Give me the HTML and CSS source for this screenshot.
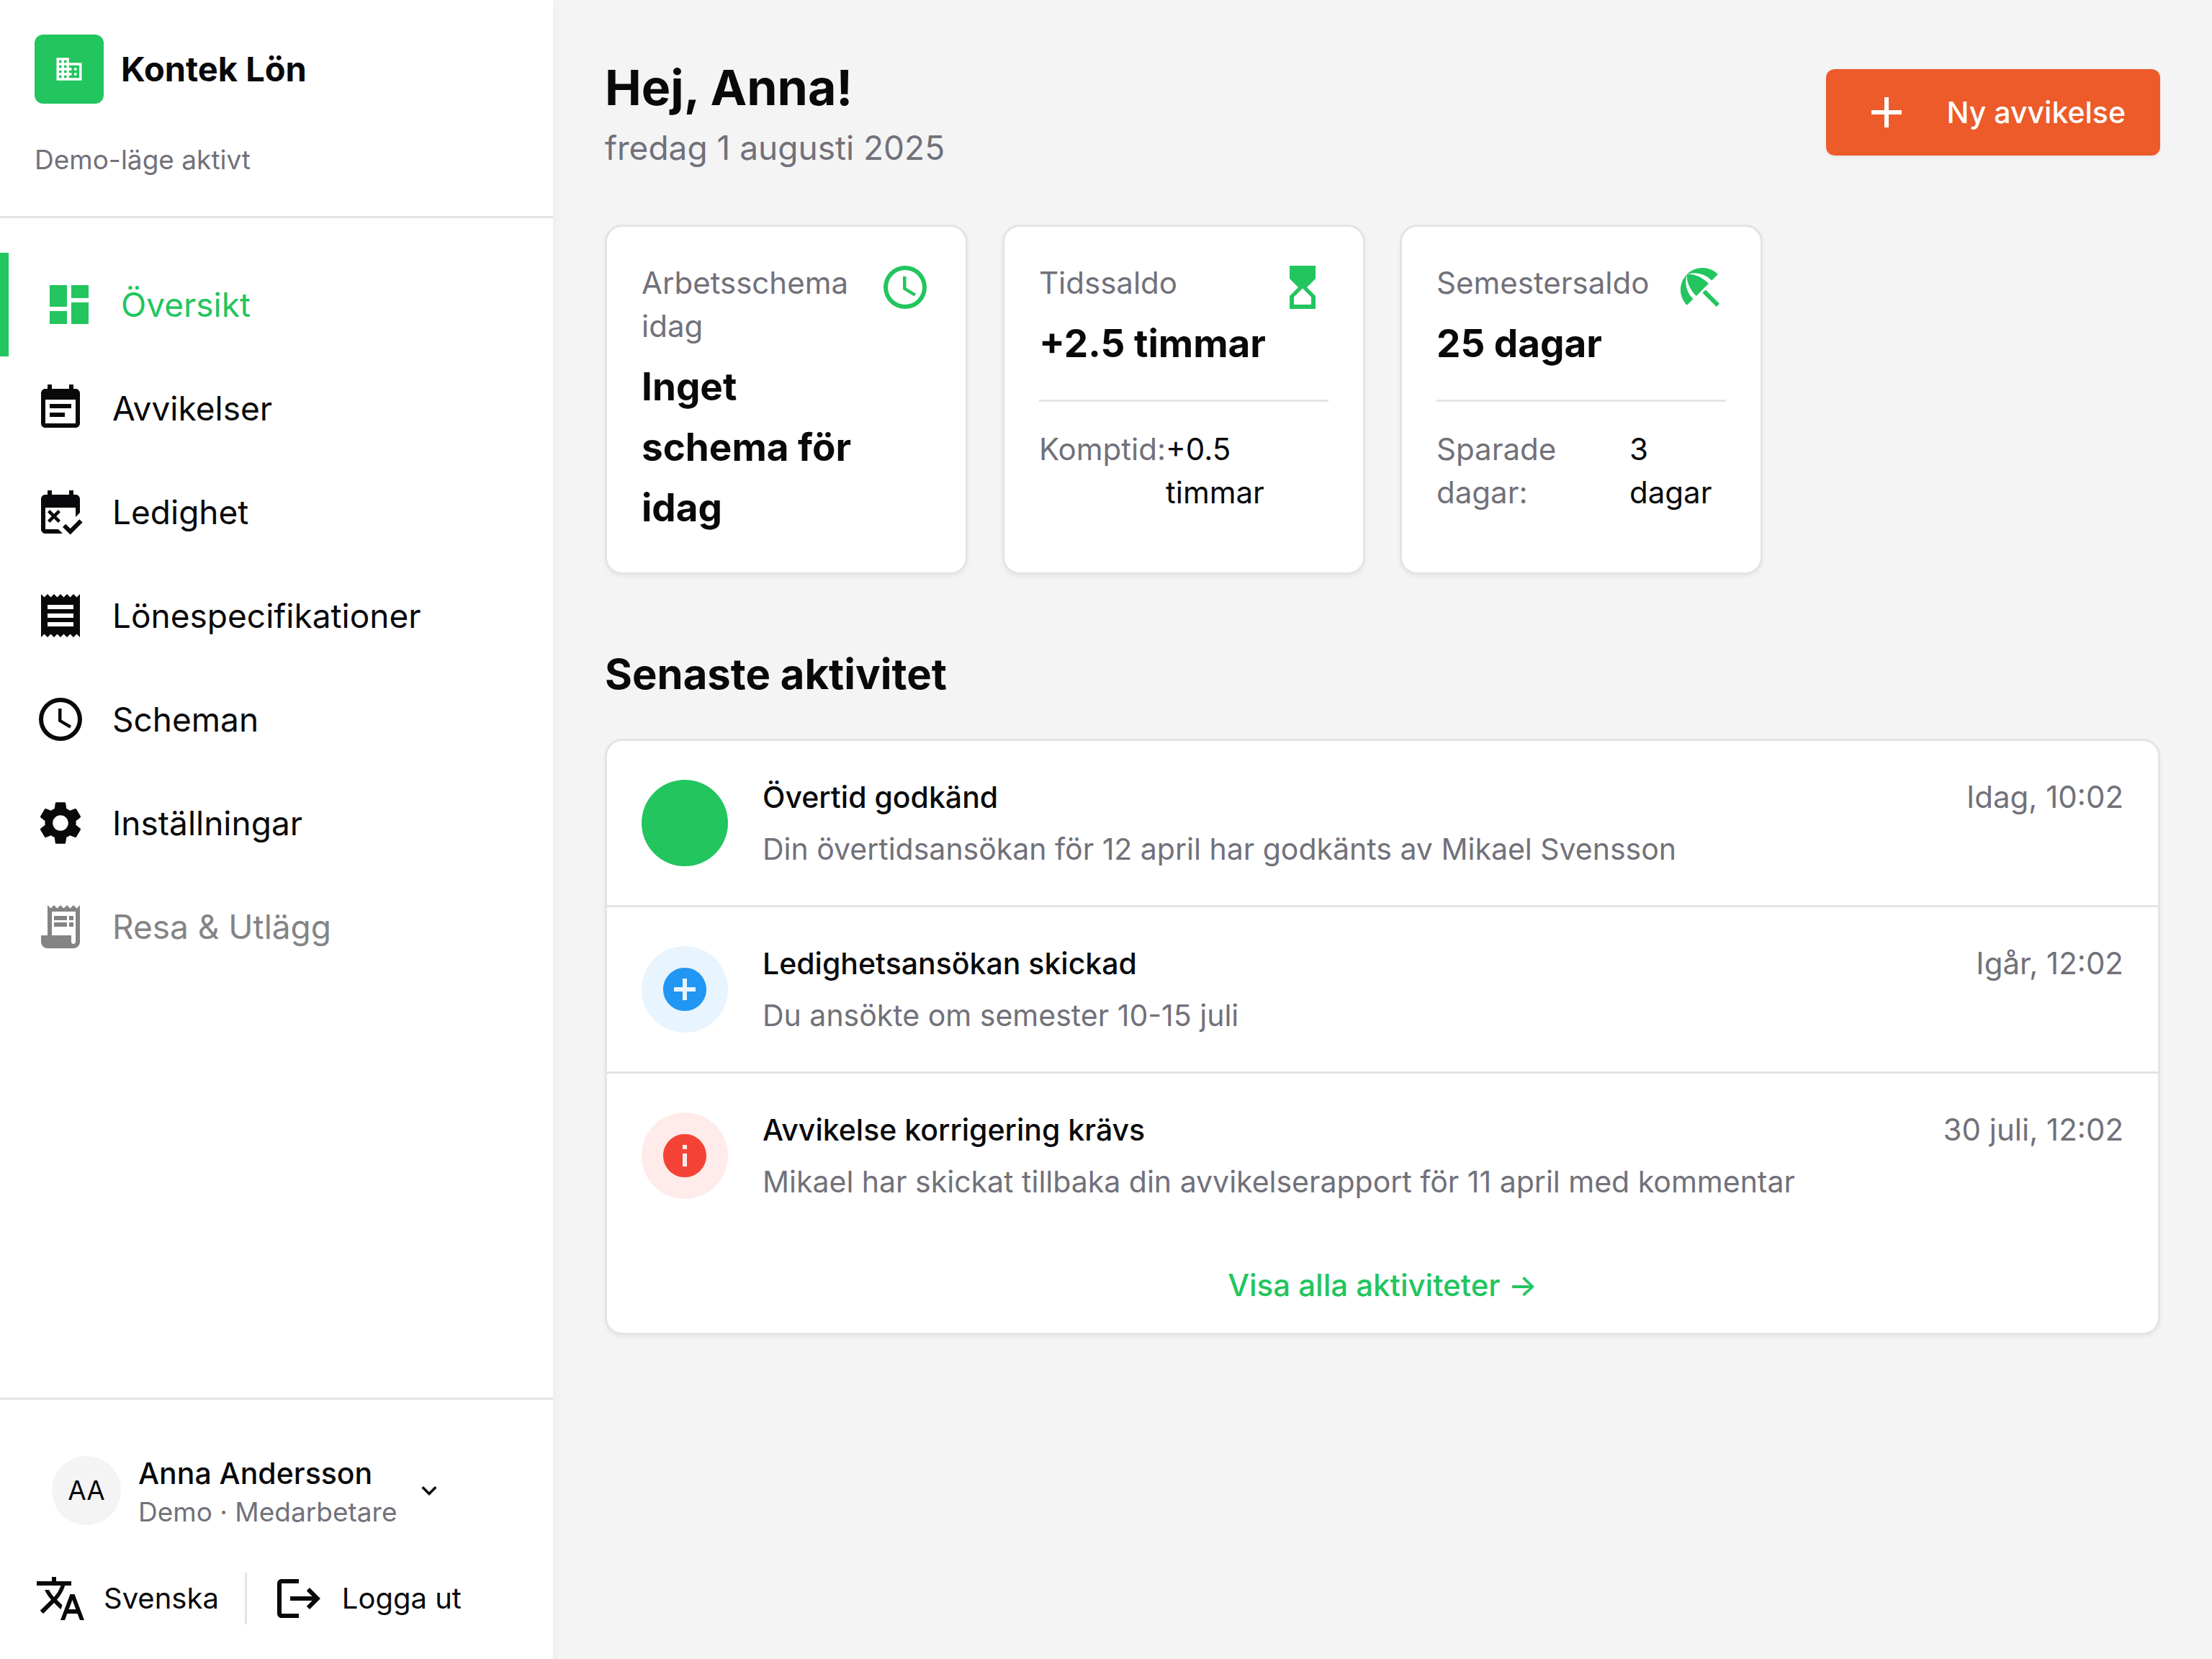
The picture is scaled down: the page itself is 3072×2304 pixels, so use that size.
FILE: index.html
```html
<!DOCTYPE html>
<html lang="sv">
<head>
<meta charset="utf-8">
<title>Kontek Lön</title>
<meta name="viewport" content="width=device-width, initial-scale=1">
<link rel="stylesheet" href="styles.css">
</head>
<body>
<div class="app">
  <aside class="sidebar">
    <header class="brand">
      <div class="brand-row">
        <span class="brand-logo"><svg class="icon-small" viewBox="0 0 24 24" aria-hidden="true"><path d="M12 7V3H2v18h20V7H12zM6 19H4v-2h2v2zm0-4H4v-2h2v2zm0-4H4V9h2v2zm0-4H4V5h2v2zm4 12H8v-2h2v2zm0-4H8v-2h2v2zm0-4H8V9h2v2zm0-4H8V5h2v2zm10 12h-8v-2h2v-2h-2v-2h2v-2h-2V9h8v10zm-2-8h-2v2h2v-2zm0 4h-2v2h2v-2z"/></svg></span>
        <span class="brand-name">Kontek Lön</span>
      </div>
      <p class="brand-mode">Demo-läge aktivt</p>
    </header>

    <nav class="nav">
      <a class="nav-item nav-item-active" href="#oversikt" aria-current="page"><svg class="icon" viewBox="0 0 24 24" aria-hidden="true"><path d="M3 13h8V3H3v10zm0 8h8v-6H3v6zm10 0h8V11h-8v10zm0-18v6h8V3h-8z"/></svg>Översikt</a>
      <a class="nav-item" href="#avvikelser"><svg class="icon" viewBox="0 0 24 24" aria-hidden="true"><path d="M19 3h-1V1h-2v2H8V1H6v2H5c-1.110 0-1.990.9-1.990 2L3 19c0 1.100.89 2 2 2h14c1.100 0 2-.9 2-2V5c0-1.100-.9-2-2-2zm0 16H5V8h14v11zM7 10h10v2H7zM7 14h7v2H7z"/></svg>Avvikelser</a>
      <a class="nav-item" href="#ledighet"><svg class="icon" viewBox="0 0 24 24" aria-hidden="true"><path d="M5 22c-1.100 0-2-.9-2-2V6c0-1.100.9-2 2-2h1V2h2v2h8V2h2v2h1c1.100 0 2 .9 2 2v6.300l-2 2V10H5v10h6l2 2H5z"/><path d="M12 12.060 10.940 11 9 12.940 7.060 11 6 12.060 7.940 14 6 15.940 7.060 17 9 15.060 10.940 17 12 15.940 10.060 14z"/><path d="M16.540 22.500 13 18.960l1.410-1.410 2.130 2.120 4.240-4.240 1.410 1.410z"/></svg>Ledighet</a>
      <a class="nav-item" href="#lonespecifikationer"><svg class="icon" viewBox="0 0 24 24" aria-hidden="true"><path d="M18 17H6v-2h12v2zm0-4H6v-2h12v2zm0-4H6V7h12v2zM3 22l1.5-1.5L6 22l1.5-1.5L9 22l1.5-1.5L12 22l1.5-1.5L15 22l1.5-1.5L18 22l1.5-1.5L21 22V2l-1.5 1.5L18 2l-1.5 1.5L15 2l-1.5 1.5L12 2l-1.5 1.5L9 2 7.5 3.5 6 2 4.5 3.5 3 2v20z"/></svg>Lönespecifikationer</a>
      <a class="nav-item" href="#scheman"><svg class="icon" viewBox="0 0 24 24" aria-hidden="true"><path fill-rule="evenodd" d="M12 2a10 10 0 1 0 0 20a10 10 0 1 0 0-20zM12 4a8 8 0 1 1 0 16a8 8 0 1 1 0-16z"/><path d="M12.5 7H11v6l5.250 3.150.75-1.230-4.5-2.670z"/></svg>Scheman</a>
      <a class="nav-item" href="#installningar"><svg class="icon" viewBox="0 0 24 24" aria-hidden="true"><path d="M19.14 12.94c.04-.3.06-.61.06-.94 0-.32-.02-.64-.07-.94l2.030-1.580c.18-.14.23-.41.12-.61l-1.920-3.320c-.12-.22-.37-.29-.59-.22l-2.390.96c-.5-.38-1.030-.7-1.620-.94l-.36-2.540c-.04-.24-.24-.41-.48-.41h-3.840c-.24 0-.43.17-.47.41l-.36 2.540c-.59.24-1.130.57-1.620.94l-2.390-.96c-.22-.08-.47 0-.59.22L2.740 8.870c-.12.21-.08.47.12.61l2.030 1.580c-.05.3-.09.63-.09.94s.02.64.07.94l-2.030 1.580c-.18.14-.23.41-.12.61l1.920 3.320c.12.22.37.29.59.22l2.390-.96c.5.38 1.030.7 1.620.94l.36 2.540c.05.24.24.41.48.41h3.840c.24 0 .44-.17.47-.41l.36-2.540c.59-.24 1.130-.56 1.620-.94l2.390.96c.22.08.47 0 .59-.22l1.920-3.320c.12-.22.07-.47-.12-.61l-2.010-1.580zM12 15.600c-1.980 0-3.600-1.620-3.600-3.600s1.620-3.600 3.600-3.600 3.600 1.620 3.600 3.600-1.620 3.600-3.600 3.600z"/></svg>Inställningar</a>
      <a class="nav-item nav-item-disabled" href="#resa" aria-disabled="true"><svg class="icon" viewBox="0 0 24 24" aria-hidden="true"><path d="M19.5 3.5L18 2l-1.5 1.5L15 2l-1.5 1.5L12 2l-1.5 1.5L9 2 7.500 3.500 6 2v14H3v3c0 1.660 1.340 3 3 3h12c1.660 0 3-1.340 3-3V2l-1.500 1.500zM19 19c0 .55-.45 1-1 1s-1-.45-1-1v-3H8V5h11v14z"/><path d="M9 7h6v2H9zM16 7h2v2h-2zM9 10h6v2H9zM16 10h2v2h-2z"/></svg>Resa &amp; Utlägg</a>
    </nav>

    <footer class="account">
      <button class="account-button" type="button">
        <span class="avatar">AA</span>
        <span class="account-text">
          <span class="account-name">Anna Andersson</span>
          <span class="account-role">Demo · Medarbetare</span>
        </span>
        <svg class="icon-small" viewBox="0 0 24 24" aria-hidden="true"><path d="M7.410 8.590 12 13.170l4.590-4.580L18 10l-6 6-6-6z"/></svg>
      </button>
      <div class="account-actions">
        <button class="action" type="button"><svg class="icon" viewBox="0 0 24 24" aria-hidden="true"><path d="M12.870 15.070l-2.540-2.510.03-.03c1.740-1.940 2.980-4.170 3.710-6.530H17V4h-7V2H8v2H1v1.990h11.170C11.500 7.920 10.440 9.750 9 11.350 8.070 10.320 7.300 9.190 6.690 8h-2c.73 1.630 1.730 3.170 2.980 4.560l-5.090 5.020L4 19l5-5 3.110 3.110.76-2.040zM18.500 10h-2L12 22h2l1.120-3h4.750L21 22h2l-4.500-12zm-2.620 7l1.620-4.330L19.120 17h-3.240z"/></svg>Svenska</button>
        <span class="action-divider"></span>
        <button class="action" type="button"><svg class="icon" viewBox="0 0 24 24" aria-hidden="true"><path d="M17 7l-1.410 1.410L18.170 11H8v2h10.170l-2.580 2.580L17 17l5-5zM4 5h8V3H4c-1.100 0-2 .9-2 2v14c0 1.100.9 2 2 2h8v-2H4V5z"/></svg>Logga ut</button>
      </div>
    </footer>
  </aside>

  <main class="main">
    <header class="page-header">
      <div>
        <h1 class="greeting">Hej, Anna!</h1>
        <p class="date">fredag 1 augusti 2025</p>
      </div>
      <button class="primary-button" type="button"><svg class="icon" viewBox="0 0 24 24" aria-hidden="true"><path d="M19 13h-6v6h-2v-6H5v-2h6V5h2v6h6v2z"/></svg>Ny avvikelse</button>
    </header>

    <section class="stats">
      <article class="card stat">
        <div class="stat-top">
          <div>
            <h2 class="stat-label">Arbetsschema idag</h2>
            <p class="stat-value">Inget schema för idag</p>
          </div>
          <svg class="icon stat-icon" viewBox="0 0 24 24" aria-hidden="true"><path fill-rule="evenodd" d="M12 2a10 10 0 1 0 0 20a10 10 0 1 0 0-20zM12 4a8 8 0 1 1 0 16a8 8 0 1 1 0-16z"/><path d="M12.5 7H11v6l5.250 3.150.75-1.230-4.5-2.670z"/></svg>
        </div>
      </article>
      <article class="card stat">
        <div class="stat-top">
          <div>
            <h2 class="stat-label">Tidssaldo</h2>
            <p class="stat-value">+2.5 timmar</p>
          </div>
          <svg class="icon stat-icon" viewBox="0 0 24 24" aria-hidden="true"><path d="M6 2v6h.01L6 8.010 10 12l-4 4 .01.01H6V22h12v-5.990h-.01L18 16l-4-4 4-3.990-.01-.01H18V2H6zm10 14.500V20H8v-3.500l4-4 4 4z"/></svg>
        </div>
        <dl class="stat-detail">
          <dt>Komptid:</dt>
          <dd>+0.5 timmar</dd>
        </dl>
      </article>
      <article class="card stat">
        <div class="stat-top">
          <div>
            <h2 class="stat-label">Semestersaldo</h2>
            <p class="stat-value">25 dagar</p>
          </div>
          <svg class="icon stat-icon" viewBox="0 0 24 24" aria-hidden="true"><path d="M13.127 14.560l1.430-1.430 6.440 6.443L19.570 21zm4.293-5.730l2.860-2.860c-3.950-3.950-10.350-3.960-14.300-.02 3.930-1.300 8.310-.25 11.440 2.880zM5.950 5.980c-3.940 3.950-3.930 10.350.02 14.300l2.860-2.860C5.700 14.290 4.650 9.910 5.950 5.980zm.02-.02l-.01.01c-.38 3.010 1.170 6.880 4.300 10.020l5.730-5.730c-3.130-3.130-7.010-4.680-10.020-4.300z"/></svg>
        </div>
        <dl class="stat-detail">
          <dt>Sparade dagar:</dt>
          <dd>3 dagar</dd>
        </dl>
      </article>
    </section>

    <section class="activity">
      <h2 class="section-title">Senaste aktivitet</h2>
      <div class="card">
        <ul class="activity-list">
          <li class="activity-item">
            <span class="badge badge-success"></span>
            <div class="activity-body">
              <div class="activity-head">
                <h3 class="activity-title">Övertid godkänd</h3>
                <time class="activity-time">Idag, 10:02</time>
              </div>
              <p class="activity-text">Din övertidsansökan för 12 april har godkänts av Mikael Svensson</p>
            </div>
          </li>
          <li class="activity-item">
            <span class="badge badge-info"><svg class="icon" viewBox="0 0 24 24" aria-hidden="true"><path d="M12 2C6.480 2 2 6.480 2 12s4.480 10 10 10 10-4.480 10-10S17.520 2 12 2zm5 11h-4v4h-2v-4H7v-2h4V7h2v4h4v2z"/></svg></span>
            <div class="activity-body">
              <div class="activity-head">
                <h3 class="activity-title">Ledighetsansökan skickad</h3>
                <time class="activity-time">Igår, 12:02</time>
              </div>
              <p class="activity-text">Du ansökte om semester 10-15 juli</p>
            </div>
          </li>
          <li class="activity-item">
            <span class="badge badge-error"><svg class="icon" viewBox="0 0 24 24" aria-hidden="true"><path d="M12 2C6.480 2 2 6.480 2 12s4.480 10 10 10 10-4.480 10-10S17.520 2 12 2zm1 15h-2v-6h2v6zm0-8h-2V7h2v2z"/></svg></span>
            <div class="activity-body">
              <div class="activity-head">
                <h3 class="activity-title">Avvikelse korrigering krävs</h3>
                <time class="activity-time">30 juli, 12:02</time>
              </div>
              <p class="activity-text">Mikael har skickat tillbaka din avvikelserapport för 11 april med kommentar</p>
            </div>
          </li>
        </ul>
        <div class="activity-more"><a href="#aktiviteter">Visa alla aktiviteter →</a></div>
      </div>
    </section>
  </main>
</div>
</body>
</html>
```
FILE: styles.css
```css
:root {
  --text: #09090b;
  --muted: #71717a;
  --line: #e4e4e7;
  --card-line: #e4e4e4;
  --green: #22c55e;
  --orange: #ec5b29;
  --page: #f4f4f5;
}

* { box-sizing: border-box; }

body, h1, h2, h3, p, ul, dl, dd { margin: 0; padding: 0; }

body {
  background: var(--page);
  color: var(--text);
  font-family: Inter, "Liberation Sans", sans-serif;
  font-size: 42px;
  line-height: 60px;
}

button {
  border: 0;
  background: none;
  padding: 0;
  color: inherit;
  font: inherit;
  cursor: pointer;
}

a { color: inherit; text-decoration: none; }

.icon, .icon-small { flex: none; display: block; fill: currentColor; }
.icon { width: 72px; height: 72px; }
.icon-small { width: 42px; height: 42px; }

.app { display: flex; min-height: 100vh; }

/* Sidebar */
.sidebar {
  flex: none;
  width: 768px;
  display: flex;
  flex-direction: column;
  background: #fff;
  box-shadow: 0 12px 18px -3px rgba(0, 0, 0, 0.06);
}

.brand { padding: 48px; border-bottom: 3px solid var(--line); }
.brand-row { display: flex; align-items: center; gap: 24px; }
.brand-logo {
  width: 96px;
  height: 96px;
  display: grid;
  place-items: center;
  border-radius: 12px;
  background: var(--green);
  color: #fff;
}
.brand-name { font-size: 47px; font-weight: 700; }
.brand-mode { margin-top: 48px; font-size: 37px; color: var(--muted); }

.nav { flex: 1; padding: 48px 0; font-size: 46px; }
.nav-item {
  display: flex;
  align-items: center;
  gap: 36px;
  height: 144px;
  padding: 0 48px;
}
.nav-item-active { border-left: 12px solid var(--green); color: var(--green); }
.nav-item-disabled { color: #848485; }

.account {
  display: flex;
  flex-direction: column;
  align-items: flex-start;
  gap: 36px;
  padding: 48px;
  border-top: 3px solid var(--card-line);
}
.account-button { display: flex; align-items: center; gap: 24px; padding: 24px; text-align: left; }
.avatar {
  width: 96px;
  height: 96px;
  display: grid;
  place-items: center;
  border-radius: 50%;
  background: var(--page);
  font-size: 37px;
}
.account-text { display: flex; flex-direction: column; }
.account-name { font-size: 41px; font-weight: 500; }
.account-role { font-size: 37px; line-height: 48px; color: var(--muted); }
.account-actions { display: flex; align-items: center; gap: 36px; }
.action { display: flex; align-items: center; gap: 24px; font-size: 40px; }
.action-divider { width: 3px; height: 72px; background: var(--card-line); }

/* Page */
.main { flex: 1; min-width: 0; padding: 72px; }

.page-header {
  display: flex;
  align-items: center;
  justify-content: space-between;
  margin-bottom: 72px;
}
.greeting { font-size: 68px; line-height: 99px; font-weight: 700; }
.date { font-size: 46px; line-height: 69px; color: var(--muted); }
.primary-button {
  display: flex;
  align-items: center;
  gap: 48px;
  height: 120px;
  padding: 0 48px;
  border-radius: 12px;
  background: var(--orange);
  box-shadow: 0 3px 6px rgba(0, 0, 0, 0.05);
  color: #fff;
  font-size: 41px;
  font-weight: 500;
}

.card {
  border: 3px solid var(--card-line);
  border-radius: 24px;
  background: #fff;
  box-shadow: 0 3px 6px rgba(0, 0, 0, 0.05);
}

.stats { display: grid; grid-template-columns: repeat(4, 1fr); gap: 48px; }
.stat { padding: 48px; }
.stat-top { display: flex; justify-content: space-between; }
.stat-label { font-size: 42px; font-weight: 400; color: var(--muted); }
.stat-value { margin-top: 12px; font-size: 53px; line-height: 84px; font-weight: 700; }
.stat-icon { color: var(--green); }
.stat-detail {
  display: flex;
  justify-content: space-between;
  margin-top: 36px;
  padding-top: 36px;
  border-top: 3px solid var(--card-line);
}
.stat-detail dt { color: var(--muted); }

.activity { margin-top: 96px; }
.section-title { margin-bottom: 48px; font-size: 58px; line-height: 84px; font-weight: 700; }
.activity-list { list-style: none; }
.activity-item { display: flex; align-items: center; gap: 48px; padding: 48px; }
.activity-item + .activity-item { border-top: 3px solid var(--line); }
.badge {
  flex: none;
  width: 120px;
  height: 120px;
  display: grid;
  place-items: center;
  border-radius: 50%;
}
.badge-success { background: var(--green); }
.badge-info { background: #e8f4fe; color: #2196f3; }
.badge-error { background: #feebea; color: #f44336; }
.activity-body { flex: 1; min-width: 0; }
.activity-head { display: flex; justify-content: space-between; margin-bottom: 12px; }
.activity-title { font-size: 41px; font-weight: 500; }
.activity-text { font-size: 41px; color: var(--muted); }
.activity-time { color: var(--muted); }
.activity-more { padding: 36px; text-align: center; color: var(--green); font-weight: 500; }
```
